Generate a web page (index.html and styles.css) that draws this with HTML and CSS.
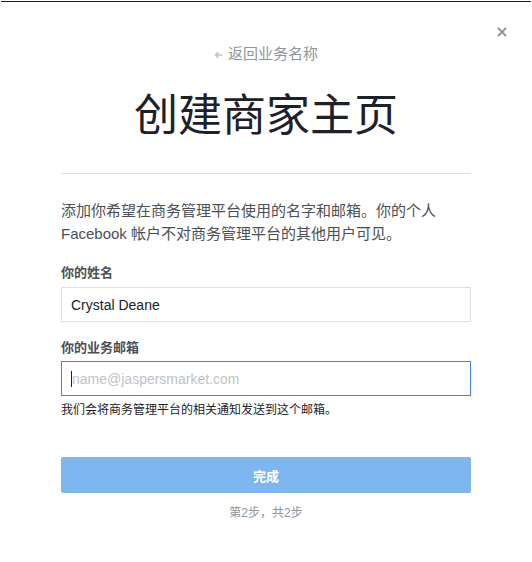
FILE: index.html
```html
<!DOCTYPE html>
<html lang="zh-CN">
<head>
<meta charset="utf-8">
<title>创建商家主页</title>
<link rel="stylesheet" href="styles.css">
</head>
<body>
<div class="modal">
  <button class="close" aria-label="关闭">
    <svg width="10" height="10" viewBox="0 0 10 10"><path d="M1 1L9 9M9 1L1 9" stroke="#8d949e" stroke-width="1.8" fill="none"/></svg>
  </button>
  <div class="content">
    <a class="back" href="#"><span class="arrow">
      <svg width="9" height="8" viewBox="0 0 9 8"><path d="M8.5 4H1.5M4.5 1L1.5 4L4.5 7" stroke="#bec3c9" stroke-width="1.5" fill="none"/></svg>
    </span>返回业务名称</a>
    <h1 class="title">创建商家主页</h1>
    <hr class="divider">
    <p class="intro">添加你希望在商务管理平台使用的名字和邮箱。你的个人 Facebook 帐户不对商务管理平台的其他用户可见。</p>
    <label class="label">你的姓名</label>
    <div class="input"><span class="value">Crystal Deane</span></div>
    <label class="label label-2">你的业务邮箱</label>
    <div class="input input-focus"><span class="caret"></span><span class="placeholder">name@jaspersmarket.com</span></div>
    <p class="help">我们会将商务管理平台的相关通知发送到这个邮箱。</p>
    <button class="submit">完成</button>
    <p class="step">第2步，共2步</p>
  </div>
</div>
</body>
</html>
```
FILE: styles.css
```css
html, body {
  margin: 0;
  padding: 0;
  background: #ffffff;
}
body {
  font-family: "Liberation Sans", Arial, "Noto Sans CJK SC", sans-serif;
  color: #1d2129;
}
.modal {
  position: relative;
  margin: 1px 1px 0 1px;
  border-top: 1px solid #1f1f1f;
  height: 560px;
  box-sizing: border-box;
}
.close {
  position: absolute;
  top: 24px;
  right: 23px;
  width: 12px;
  height: 12px;
  padding: 0;
  border: 0;
  background: none;
  display: flex;
  align-items: center;
  justify-content: center;
}
.content {
  width: 410px;
  margin: 0 auto;
  display: flex;
  flex-direction: column;
}
.back {
  margin-top: 42px;
  align-self: center;
  display: flex;
  align-items: center;
  gap: 5px;
  font-size: 15px;
  line-height: 20px;
  color: #90949c;
  text-decoration: none;
}
.arrow {
  display: flex;
  margin-top: 2px;
}
.title {
  margin: 24px 0 0;
  text-align: center;
  font-size: 44px;
  line-height: 56px;
  font-weight: normal;
  color: #1d2129;
}
.divider {
  margin: 29px 0 0;
  border: 0;
  height: 1px;
  background: #dddfe2;
}
.intro {
  margin: 25px 0 0;
  font-size: 15px;
  line-height: 23px;
  color: #4b4f56;
}
.label {
  margin-top: 20px;
  font-size: 13px;
  line-height: 16px;
  font-weight: bold;
  color: #4b4f56;
}
.label-2 {
  margin-top: 18px;
}
.input {
  margin-top: 6px;
  height: 35px;
  box-sizing: border-box;
  border: 1px solid #dddfe2;
  display: flex;
  align-items: center;
  padding-left: 9px;
  font-size: 14px;
}
.label-2 + .input {
  margin-top: 5px;
}
.input-focus {
  border-color: #4080ff;
}
.value {
  color: #1d2129;
}
.caret {
  width: 1px;
  height: 16px;
  background: #1d2129;
}
.placeholder {
  color: #bec3c9;
}
.help {
  margin: 6px 0 0;
  font-size: 12px;
  line-height: 16px;
  color: #1d2129;
}
.submit {
  margin-top: 39px;
  height: 36px;
  border: 0;
  border-radius: 2px;
  background: #7eb6ef;
  color: #ffffff;
  font-family: inherit;
  font-size: 13px;
  font-weight: bold;
}
.step {
  margin: 12px 0 0;
  text-align: center;
  font-size: 12px;
  line-height: 16px;
  color: #90949c;
}
```
